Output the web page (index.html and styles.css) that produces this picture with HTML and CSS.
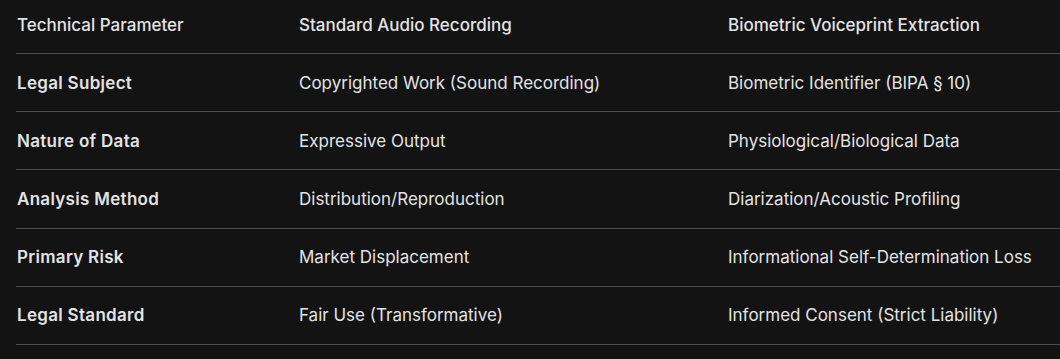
FILE: index.html
```html
<!DOCTYPE html>
<html lang="en">
<head>
<meta charset="utf-8">
<title>Comparison</title>
<link rel="stylesheet" href="styles.css">
</head>
<body>
<div class="table">
  <div class="row head">
    <div class="cell">Technical Parameter</div>
    <div class="cell">Standard Audio Recording</div>
    <div class="cell">Biometric Voiceprint Extraction</div>
  </div>
  <div class="row">
    <div class="cell label">Legal Subject</div>
    <div class="cell">Copyrighted Work (Sound Recording)</div>
    <div class="cell">Biometric Identifier (BIPA § 10)</div>
  </div>
  <div class="row">
    <div class="cell label">Nature of Data</div>
    <div class="cell">Expressive Output</div>
    <div class="cell">Physiological/Biological Data</div>
  </div>
  <div class="row">
    <div class="cell label">Analysis Method</div>
    <div class="cell">Distribution/Reproduction</div>
    <div class="cell">Diarization/Acoustic Profiling</div>
  </div>
  <div class="row">
    <div class="cell label">Primary Risk</div>
    <div class="cell">Market Displacement</div>
    <div class="cell">Informational Self-Determination Loss</div>
  </div>
  <div class="row">
    <div class="cell label">Legal Standard</div>
    <div class="cell">Fair Use (Transformative)</div>
    <div class="cell">Informed Consent (Strict Liability)</div>
  </div>
</div>
</body>
</html>
```
FILE: styles.css
```css
html, body {
  margin: 0;
  padding: 0;
  background: #131314;
  width: 1060px;
  height: 359px;
  overflow: hidden;
}
body {
  font-family: Inter, "Noto Sans", sans-serif;
  font-size: 17px;
  color: #e3e3e3;
}
.table {
  margin-left: 16px;
}
.row {
  display: grid;
  grid-template-columns: 282px 429px 1fr;
  height: 57.2px;
  align-items: center;
  border-bottom: 1px solid #4e4e50;
}
.row.head {
  height: 53px;
  align-items: start;
  font-weight: 500;
}
.row.head .cell {
  padding-top: 15px;
}
.cell {
  padding-left: 1px;
  white-space: nowrap;
}
.label {
  font-weight: 600;
  letter-spacing: 0.3px;
}
```
